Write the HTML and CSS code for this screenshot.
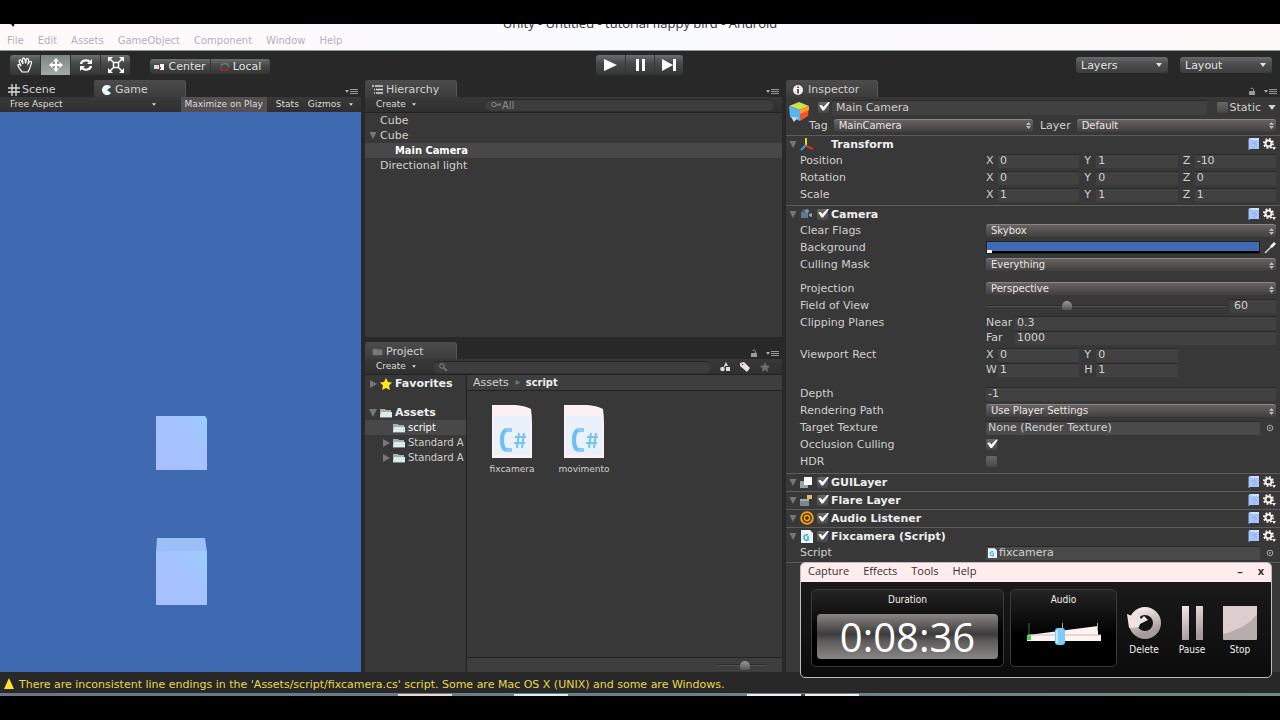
FILE: index.html
```html
<!DOCTYPE html>
<html lang="en">
<head>
<meta charset="utf-8">
<title>Unity - Untitled - tutorial flappy bird - Android</title>
<link rel="stylesheet" href="styles.css">
</head>
<body>
<svg class="defs" aria-hidden="true">
  <symbol id="fold" viewBox="0 0 8 8"><path d="M0 0H8L4 8Z" fill="#777"/></symbol>
  <symbol id="foldr" viewBox="0 0 8 8"><path d="M1 0L8 4L1 8Z" fill="#777"/></symbol>
  <symbol id="down" viewBox="0 0 6 4"><path d="M0 0H6L3 4Z" fill="currentColor"/></symbol>
  <symbol id="panemenu" viewBox="0 0 13 7"><path d="M0 2H4L2 5Z" fill="#aaa"/><path d="M5 1.5H13M5 3.5H13M5 5.5H13" stroke="#999" stroke-width="1"/></symbol>
  <symbol id="lock" viewBox="0 0 8 8"><path d="M1 4H7V8H1Z" fill="#999"/><path d="M5.5 4V2.500A1.600 1.600 0 0 0 2.500 2" fill="none" stroke="#999"/></symbol>
  <symbol id="book" viewBox="0 0 12 12"><path d="M0 1H2V12H0Z" fill="#5a7cb8"/><path d="M1 0H11V11H1Z" fill="#a9c4f5"/><path d="M3 0H11V2H3Z" fill="#cfe0ff"/><path d="M4 5H8M7 7H9M5 9H7" stroke="#8da9e6"/></symbol>
  <symbol id="gear" viewBox="0 0 13 12"><circle cx="5.5" cy="5.5" r="3" fill="none" stroke="#f4f0ea" stroke-width="2"/><circle cx="5.5" cy="5.5" r="4.6" fill="none" stroke="#f4f0ea" stroke-width="1.8" stroke-dasharray="1.8 1.81"/><path d="M9 9H13L11 12Z" fill="#f4f0ea"/></symbol>
  <symbol id="folder" viewBox="0 0 12 10"><path d="M0 1H5L6 2H11V9H0Z" fill="#9fb0b0"/><path d="M1 4H12V9H0Z" fill="#dfe9e8"/><path d="M0 9H12V10H0Z" fill="#7a8886"/></symbol>
  <symbol id="csfile" viewBox="0 0 12 13"><path d="M0 0H9L12 3V13H0Z" fill="#e9f4fc"/><path d="M7 5A2.800 2.800 0 1 0 7 10V6" fill="none" stroke="#39a9e6" stroke-width="1.5"/></symbol>
  <symbol id="target" viewBox="0 0 8 8"><circle cx="4" cy="4" r="2.8" fill="none" stroke="#aaa"/><circle cx="4" cy="4" r="1" fill="#999"/></symbol>
  <symbol id="script" viewBox="0 0 40 54"><path d="M0 0H24Q34 1 39 4Q40 12 40 18V53H0Z" fill="#fbf0f4"/><path d="M2 11H38V50H2Z" fill="#eaf1fb"/><path d="M20 25H15Q10 26 10 35Q10 45 15 45H20" fill="none" stroke="#8accf6" stroke-width="4"/><path d="M14 25Q10 27 10 35Q10 43 14 45" fill="none" stroke="#70bff2" stroke-width="4"/><path d="M27 28L25 43M32 28L30 43M23 32H34M22 38H33" stroke="#74c2f0" stroke-width="2"/></symbol>
</svg>

<div class="app">
  <header class="titlebar">
    <div class="title"><svg class="applogo" viewBox="0 0 8 4"><path d="M1 0H7V3H4V1Z" fill="#111"/></svg><span>Unity - Untitled - tutorial flappy bird - Android</span></div>
    <nav class="menubar">
      <button>File</button><button>Edit</button><button>Assets</button><button>GameObject</button><button>Component</button><button>Window</button><button>Help</button>
    </nav>
  </header>

  <div class="toolbar">
    <div class="left">
      <div class="group tools">
        <button aria-label="Hand"><svg width="18" height="18" viewBox="0 0 18 18"><path d="M6 16C4 13 1 10 2 8.500C3 8 4 9 5 10L3 5C3 3.500 5 3.500 5.500 5L7 8L6.500 3C7 1.500 8.500 2 9 3.500L9.500 7.500L10.500 3C11.500 2 13 3 12.500 4.500L12 8L14 5.500C15 5 16 6 15.500 7L13.500 13L12 16Z" fill="#3c4040" stroke="#fff" stroke-width="1.200"/></svg></button>
        <button class="on" aria-label="Move"><svg width="16" height="16" viewBox="0 0 16 16"><path d="M8 1L11 4.500H9V7H11.500V5L15 8L11.500 11V9H9V11.500H11L8 15L5 11.500H7V9H4.500V11L1 8L4.500 5V7H7V4.500H5Z" fill="#fff"/></svg></button>
        <button aria-label="Rotate"><svg width="16" height="16" viewBox="0 0 16 16"><path d="M3 7A5 4 0 0 1 12 5M13 9A5 4 0 0 1 4 11" fill="none" stroke="#fff" stroke-width="2.200"/><path d="M14 2V7H9ZM2 14V9H7Z" fill="#fff"/></svg></button>
        <button aria-label="Scale"><svg width="18" height="18" viewBox="0 0 18 18"><path d="M6.500 6.500H11.500V11.500H6.500Z" fill="none" stroke="#fff" stroke-width="1.500"/><path d="M1 1H6L1 6ZM17 1H12L17 6ZM1 17H6L1 12ZM17 17H12L17 12Z" fill="#fff"/><path d="M3 3L6 6M15 3L12 6M3 15L6 12M15 15L12 12" stroke="#fff" stroke-width="1.500"/></svg></button>
      </div>
      <div class="group pivots">
        <button><svg width="11" height="8" viewBox="0 0 11 8"><path d="M0 2H5V6H0Z" fill="#ddd"/><path d="M6 1H10V7H6Z" fill="#fff"/><path d="M5 4H7V6H5Z" fill="#b33"/></svg>Center</button>
        <button><svg width="10" height="10" viewBox="0 0 10 10"><path d="M1 6A4 4 0 0 1 9 5" fill="none" stroke="#777" stroke-width="1.500"/><path d="M1 4V8H8V5" fill="none" stroke="#833" stroke-width="1.500"/></svg>Local</button>
      </div>
    </div>
    <div class="group play">
      <button aria-label="Play"><svg width="14" height="14" viewBox="0 0 14 14"><path d="M1 1L14 7L1 13Z" fill="#fff"/></svg></button>
      <button aria-label="Pause"><svg width="14" height="14" viewBox="0 0 14 14"><path d="M3 1H6V13H3ZM9 1H12V13H9Z" fill="#fff"/></svg></button>
      <button aria-label="Step"><svg width="16" height="14" viewBox="0 0 16 14"><path d="M1 1L12 7L1 13ZM12 1H15V13H12Z" fill="#fff"/></svg></button>
    </div>
    <div class="right">
      <button class="drop">Layers<svg width="6" height="4"><use href="#down"/></svg></button>
      <button class="drop">Layout<svg width="6" height="4"><use href="#down"/></svg></button>
    </div>
  </div>

  <main class="workspace">
    <section class="pane game">
      <div class="tabs">
        <button class="tab scene"><svg width="12" height="12" viewBox="0 0 12 12"><path d="M4 0V12M8 0V12M0 4H12M0 8H12" stroke="#ddd" stroke-width="1.300"/></svg>Scene</button>
        <button class="tab active"><svg width="10" height="10" viewBox="0 0 10 10"><path d="M9 2A5 5 0 1 0 9 8L5 5Z" fill="#e8ffff"/></svg>Game</button>
        <span class="corner"><svg width="13" height="7"><use href="#panemenu"/></svg></span>
      </div>
      <div class="panebar">
        <button class="aspect">Free Aspect<svg width="4" height="3"><use href="#down"/></svg></button>
        <button class="max">Maximize on Play</button>
        <button>Stats</button>
        <button>Gizmos<svg width="4" height="3"><use href="#down"/></svg></button>
      </div>
      <svg class="view" viewBox="0 0 361 560" preserveAspectRatio="xMidYMax slice">
        <defs><linearGradient id="face" x1="0" y1="1" x2="1" y2="0"><stop offset="0" stop-color="#a8bfff"/><stop offset=".6" stop-color="#a4c2ff"/><stop offset="1" stop-color="#9cccfb"/></linearGradient></defs>
        <path d="M0 0H361V560H0Z" fill="#3f69b0"/>
        <path d="M156 304H205L207 307V358H156Z" fill="url(#face)"/>
        <path d="M157 426H205L207 440H156Z" fill="#9dbff8"/>
        <path d="M156 439H207V493H156Z" fill="url(#face)"/>
      </svg>
    </section>

    <div class="middle">
      <section class="pane">
        <div class="tabs">
          <button class="tab active"><svg width="11" height="9" viewBox="0 0 11 9"><path d="M0 1H2M3 1H11M4 4.500H11M4 8H11M2 4.500H3M2 8H3" stroke="#ddd" stroke-width="1.400"/></svg>Hierarchy</button>
          <span class="corner"><svg width="13" height="7"><use href="#panemenu"/></svg></span>
        </div>
        <div class="panebar">
          <button class="create">Create<svg width="4" height="3"><use href="#down"/></svg></button>
          <label class="search all"><svg width="10" height="8" viewBox="0 0 10 8"><circle cx="3" cy="3.500" r="2.200" fill="none" stroke="#888"/><path d="M5 4H10M7 3H10" stroke="#888"/></svg><input type="text" placeholder="All" aria-label="Search hierarchy"></label>
        </div>
        <ul class="tree">
          <li>Cube</li>
          <li><svg class="tri" width="8" height="7"><use href="#fold"/></svg>Cube</li>
          <li class="child sel">Main Camera</li>
          <li>Directional light</li>
        </ul>
      </section>

      <section class="pane">
        <div class="tabs">
          <button class="tab active"><svg width="11" height="8" viewBox="0 0 12 10"><path d="M0 1H5L6 2H12V9H0Z" fill="#777"/></svg>Project</button>
          <span class="corner"><svg width="8" height="8"><use href="#lock"/></svg><svg width="13" height="7"><use href="#panemenu"/></svg></span>
        </div>
        <div class="panebar">
          <button class="create">Create<svg width="4" height="3"><use href="#down"/></svg></button>
          <label class="search"><svg width="8" height="8" viewBox="0 0 8 8"><circle cx="3" cy="3" r="2.300" fill="none" stroke="#888"/><path d="M5 5L8 8" stroke="#888" stroke-width="1.500"/></svg><input type="text" aria-label="Search project"></label>
          <div class="minis">
            <button aria-label="Filter by type"><svg width="10" height="10" viewBox="0 0 10 10"><path d="M6 0L8 4H4Z" fill="#ddd"/><circle cx="2.500" cy="7" r="2.300" fill="#ddd"/><path d="M6 5H10V9H6Z" fill="#ddd"/><path d="M3 6L6 3" stroke="#ddd"/></svg></button>
            <button aria-label="Filter by label"><svg width="10" height="10" viewBox="0 0 10 10"><path d="M0 1L4 0L10 6L7 10L0 4Z" fill="#eadede"/><circle cx="2.500" cy="2.500" r=".8" fill="#444"/></svg></button>
            <button aria-label="Save search"><svg width="10" height="10" viewBox="0 0 10 10"><path d="M5 0L6.500 3.500L10 4L7.500 6.500L8 10L5 8L2 10L2.500 6.500L0 4L3.500 3.500Z" fill="#6c6c6c"/></svg></button>
          </div>
        </div>
        <div class="project">
          <ul class="folders">
            <li class="top"><svg width="8" height="8"><use href="#foldr"/></svg><svg width="12" height="12" viewBox="0 0 12 12"><path d="M6 0L8 4L12 4.500L9 7.500L10 12L6 10L2 12L3 7.500L0 4.500L4 4Z" fill="#ffea1a"/></svg><b>Favorites</b></li>
            <li class="top gap"><svg width="8" height="8"><use href="#fold"/></svg><svg width="12" height="10"><use href="#folder"/></svg><b>Assets</b></li>
            <li class="sub sel"><i></i><svg width="12" height="10"><use href="#folder"/></svg>script</li>
            <li class="sub"><svg width="8" height="8"><use href="#foldr"/></svg><svg width="12" height="10"><use href="#folder"/></svg>Standard A</li>
            <li class="sub"><svg width="8" height="8"><use href="#foldr"/></svg><svg width="12" height="10"><use href="#folder"/></svg>Standard A</li>
          </ul>
          <div class="browser">
            <div class="crumbs"><a href="#">Assets</a><svg width="5" height="5"><use href="#foldr"/></svg><b>script</b></div>
            <div class="files">
              <figure><svg width="40" height="54"><use href="#script"/></svg><figcaption>fixcamera</figcaption></figure>
              <figure><svg width="40" height="54"><use href="#script"/></svg><figcaption>movimento</figcaption></figure>
            </div>
            <div class="zoombar"><input type="range" class="range" min="0" max="100" value="57" aria-label="Icon size"></div>
          </div>
        </div>
      </section>
    </div>

    <section class="pane inspector">
      <div class="tabs">
        <button class="tab active"><svg width="10" height="10" viewBox="0 0 10 10"><circle cx="5" cy="5" r="5" fill="#f4eeee"/><path d="M5 4V8.500M5 1.500V3" stroke="#333" stroke-width="1.600"/></svg>Inspector</button>
        <span class="corner"><svg width="8" height="8"><use href="#lock"/></svg><svg width="13" height="7"><use href="#panemenu"/></svg></span>
      </div>
      <div class="object">
        <svg class="cube" width="20" height="20" viewBox="0 0 20 20"><path d="M0 4L10 0L20 4L11 8Z" fill="#cfe04a"/><path d="M0 4L11 8V19L1 15Z" fill="#58b4f0"/><path d="M11 8L20 4L19 14L11 19Z" fill="#f0562a"/><path d="M11 8L20 4V8L11 12Z" fill="#ff9a30"/><path d="M2 15H9L5 20Z" fill="#c4dcf4"/></svg>
        <div class="lines">
          <div class="line name">
            <input type="checkbox" class="check" checked aria-label="Active">
            <input type="text" class="field" value="Main Camera" aria-label="Name">
            <label class="static"><input type="checkbox" class="check">Static</label>
            <svg width="8" height="5"><use href="#down"/></svg>
          </div>
          <div class="line tags">
            <label for="tag">Tag</label><select id="tag" class="popup"><option>MainCamera</option></select>
            <label for="layer">Layer</label><select id="layer" class="popup"><option>Default</option></select>
          </div>
        </div>
      </div>

      <div class="component">
        <div class="head"><svg width="8" height="7"><use href="#fold"/></svg><svg width="14" height="13" viewBox="0 0 14 13"><path d="M6 0V8" stroke="#d8e020" stroke-width="2"/><path d="M6 7L1 12" stroke="#3aa0e8" stroke-width="2"/><path d="M6 8L13 11" stroke="#d8301c" stroke-width="2"/></svg><i></i><h2>Transform</h2><span class="acts"><svg width="12" height="12"><use href="#book"/></svg><svg width="13" height="12"><use href="#gear"/></svg></span></div>
        <div class="row"><span>Position</span><div class="xyz"><label>X<input class="field" value="0"></label><label>Y<input class="field" value="1"></label><label>Z<input class="field" value="-10"></label></div></div>
        <div class="row"><span>Rotation</span><div class="xyz"><label>X<input class="field" value="0"></label><label>Y<input class="field" value="0"></label><label>Z<input class="field" value="0"></label></div></div>
        <div class="row"><span>Scale</span><div class="xyz"><label>X<input class="field" value="1"></label><label>Y<input class="field" value="1"></label><label>Z<input class="field" value="1"></label></div></div>
      </div>

      <div class="component">
        <div class="head"><svg width="8" height="7"><use href="#fold"/></svg><svg width="14" height="12" viewBox="0 0 14 12"><path d="M1 4H8V10H1Z" fill="#65788c"/><circle cx="4" cy="3" r="2" fill="#4f6275"/><circle cx="7" cy="3" r="2" fill="#7d93a8"/><path d="M9 6L12 5V9L9 8Z" fill="#8aa0b5"/></svg><input type="checkbox" class="check" checked aria-label="Camera enabled"><h2>Camera</h2><span class="acts"><svg width="12" height="12"><use href="#book"/></svg><svg width="13" height="12"><use href="#gear"/></svg></span></div>
        <div class="row"><label for="cf">Clear Flags</label><select id="cf" class="popup"><option>Skybox</option></select></div>
        <div class="row"><label for="bg">Background</label><div class="picker"><button id="bg" class="swatch" aria-label="Background colour"></button><svg width="12" height="12" viewBox="0 0 12 12"><path d="M1 11L8 4" stroke="#ddd" stroke-width="1.500"/><path d="M7 5L11 1" stroke="#fff" stroke-width="2.500"/></svg></div></div>
        <div class="row"><label for="cm">Culling Mask</label><select id="cm" class="popup"><option>Everything</option></select></div>
        <div class="row spaced"><label for="pr">Projection</label><select id="pr" class="popup"><option>Perspective</option></select></div>
        <div class="row"><label for="fov">Field of View</label><div class="slide"><input id="fov" type="range" class="range" min="1" max="179" value="60"><input class="field" value="60" aria-label="Field of View value"></div></div>
        <div class="row double"><span>Clipping Planes</span><div class="stack"><label>Near<input class="field" value="0.3"></label><label>Far<input class="field" value="1000"></label></div></div>
        <div class="row double"><span>Viewport Rect</span><div class="xyz"><label>X<input class="field" value="0"></label><label>Y<input class="field" value="0"></label><i></i><label>W<input class="field" value="1"></label><label>H<input class="field" value="1"></label></div></div>
        <div class="row spaced"><label for="dp">Depth</label><input id="dp" class="field" value="-1"></div>
        <div class="row"><label for="rp">Rendering Path</label><select id="rp" class="popup"><option>Use Player Settings</option></select></div>
        <div class="row"><label for="tt">Target Texture</label><div class="picker"><input id="tt" class="field ref" value="None (Render Texture)"><svg width="8" height="8"><use href="#target"/></svg></div></div>
        <div class="row"><label for="oc">Occlusion Culling</label><input id="oc" type="checkbox" class="check" checked></div>
        <div class="row"><label for="hdr">HDR</label><input id="hdr" type="checkbox" class="check"></div>
      </div>

      <div class="component slim">
        <div class="head"><svg width="8" height="7"><use href="#fold"/></svg><svg width="14" height="13" viewBox="0 0 14 13"><path d="M0 5H8V12H0Z" fill="#98a4aa"/><path d="M4 1H12V9H4Z" fill="#f4f6fa"/></svg><input type="checkbox" class="check" checked aria-label="GUILayer enabled"><h2>GUILayer</h2><span class="acts"><svg width="12" height="12"><use href="#book"/></svg><svg width="13" height="12"><use href="#gear"/></svg></span></div>
      </div>
      <div class="component slim">
        <div class="head"><svg width="8" height="7"><use href="#fold"/></svg><svg width="14" height="13" viewBox="0 0 14 13"><path d="M0 5H9V12H0Z" fill="#7c8a90"/><path d="M0 5H9V7H0Z" fill="#a0adb2"/><path d="M7 1H12V5H7Z" fill="#e8b868"/></svg><input type="checkbox" class="check" checked aria-label="Flare Layer enabled"><h2>Flare Layer</h2><span class="acts"><svg width="12" height="12"><use href="#book"/></svg><svg width="13" height="12"><use href="#gear"/></svg></span></div>
      </div>
      <div class="component slim">
        <div class="head"><svg width="8" height="7"><use href="#fold"/></svg><svg width="14" height="14" viewBox="0 0 14 14"><circle cx="7" cy="7" r="5.800" fill="#3a2a10" stroke="#f6a016" stroke-width="2"/><circle cx="7" cy="7" r="2.600" fill="none" stroke="#f6a016" stroke-width="1.600"/></svg><input type="checkbox" class="check" checked aria-label="Audio Listener enabled"><h2>Audio Listener</h2><span class="acts"><svg width="12" height="12"><use href="#book"/></svg><svg width="13" height="12"><use href="#gear"/></svg></span></div>
      </div>
      <div class="component last">
        <div class="head"><svg width="8" height="7"><use href="#fold"/></svg><svg width="14" height="13"><use href="#csfile"/></svg><input type="checkbox" class="check" checked aria-label="Fixcamera enabled"><h2>Fixcamera (Script)</h2><span class="acts"><svg width="12" height="12"><use href="#book"/></svg><svg width="13" height="12"><use href="#gear"/></svg></span></div>
        <div class="row"><label for="sc">Script</label><div class="picker"><div class="field ref withicon"><svg width="9" height="10"><use href="#csfile"/></svg><input id="sc" value="fixcamera"></div><svg width="8" height="8"><use href="#target"/></svg></div></div>
      </div>
    </section>
  </main>

  <footer class="status"><svg width="10" height="12" viewBox="0 0 10 12"><path d="M5 0L10 11H0Z" fill="#ffe12a"/></svg>There are inconsistent line endings in the 'Assets/script/fixcamera.cs' script. Some are Mac OS X (UNIX) and some are Windows.</footer>
  <div class="taskedge"></div>

  <aside class="recorder">
    <div class="rec-menu"><button>Capture</button><button>Effects</button><button>Tools</button><button>Help</button><span class="rec-win"><button aria-label="Minimize">–</button><button aria-label="Close">x</button></span></div>
    <div class="rec-body">
      <div class="box duration"><h3>Duration</h3><output>0:08:36</output></div>
      <div class="box audio"><h3>Audio</h3>
        <svg width="76" height="24" viewBox="0 0 76 24"><path d="M2 12L72 3V12H75V18H1V12Z" fill="#fff2f2"/><path d="M3 0V12" stroke="#4a6a4a"/><path d="M36.500 0V8M71.500 0V8" stroke="#aaa"/><path d="M1 12H5V17H1Z" fill="#43d83c"/><path d="M2 12H75" stroke="#cbbcbc" stroke-width="1"/><rect x="29" y="5" width="10" height="17" rx="3" fill="#7ecdf6"/><path d="M31 7V20" stroke="#bce8ff" stroke-width="2"/></svg>
      </div>
      <div class="rec-btns">
        <button><svg width="34" height="34" viewBox="0 0 34 34"><defs><linearGradient id="mt" x1="0" y1="0" x2="0.300" y2="1"><stop offset="0" stop-color="#f8e8e8"/><stop offset="1" stop-color="#a49c9c"/></linearGradient></defs><circle cx="18" cy="17" r="12" fill="none" stroke="url(#mt)" stroke-width="8"/><path d="M0 8L5 10L9 5L14 13L17 10L21 14L13 18L12 21L2 22Z" fill="#f0e2e2"/></svg>Delete</button>
        <button><svg width="34" height="34" viewBox="0 0 34 34"><path d="M7 0H14V34H7ZM21 0H28V34H21Z" fill="url(#mt)"/></svg>Pause</button>
        <button><svg width="34" height="34" viewBox="0 0 34 34"><rect width="34" height="34" rx="1" fill="#b8adad"/><path d="M0 0H34V8Q24 22 0 28Z" fill="#dccece"/></svg>Stop</button>
      </div>
    </div>
  </aside>
</div>
</body>
</html>
```
FILE: styles.css
```css
* { box-sizing: border-box; }
body {
  margin: 0;
  background: #000;
  color: #d2d0ce;
  font: 11px/15px "DejaVu Sans", Verdana, sans-serif;
}
button, input, select { font: inherit; color: inherit; margin: 0; padding: 0; border: 0; background: none; }
ul { list-style: none; margin: 0; padding: 0; }
h2, h3, figure { margin: 0; font-size: inherit; }
svg { flex: none; }
b { font-weight: bold; }
.defs { position: absolute; width: 0; height: 0; }

.app {
  position: relative;
  display: flex;
  flex-direction: column;
  min-height: 100vh;
  padding: 24px 0;
}

/* window title and menu */
.titlebar { height: 27px; background: linear-gradient(90deg, #fffafa, #fafbff 50%, #fffafa); border-bottom: 1px solid #8b9995; }
.title {
  display: flex;
  align-items: flex-end;
  justify-content: center;
  height: 7px;
  overflow: hidden;
  font: 13px/16px "Open Sans", sans-serif;
  color: #333;
  position: relative;
}
.applogo { position: absolute; left: 8px; top: 0; width: 8px; height: 3px; }
.menubar { display: flex; gap: 14px; padding: 2px 7px; font-size: 10px; }
.menubar button { color: #b4afbc; line-height: 15px; }

/* main toolbar */
.toolbar {
  display: grid;
  grid-template-columns: 1fr auto 1fr;
  align-items: start;
  padding: 4px 8px 0 10px;
  height: 29px;
  background: #282828;
}
.left { display: flex; gap: 20px; }
.right { display: flex; gap: 12px; justify-content: flex-end; padding-top: 2px; }
.group { display: flex; border-radius: 3px; overflow: hidden; background: linear-gradient(#6a6e6e, #474a4a 40%, #343636); }
.group button { display: flex; align-items: center; justify-content: center; }
.group button + button { border-left: 1px solid #333; }
.tools button { width: 30px; height: 20px; }
.group .on { background: linear-gradient(#7e8684, #a4aaa8); }
.pivots { margin-top: 4px; height: 15px; }
.pivots button { width: 60px; gap: 3px; color: #e4e2e0; }
.play { margin-right: 4px; }
.play button { width: 29px; height: 20px; }
.drop {
  display: flex;
  align-items: center;
  justify-content: space-between;
  width: 92px;
  height: 16px;
  padding: 0 6px 0 5px;
  border-radius: 3px;
  background: linear-gradient(#666a6a, #4c5050 40%, #3c3e3e);
  color: #e4e2e0;
}

/* workspace */
.workspace {
  flex: 1;
  display: grid;
  grid-template-columns: 361fr 417fr 494fr;
  gap: 4px;
  background: #282828;
}
.middle { display: grid; grid-template-rows: 257fr 330fr; gap: 5px; min-width: 0; }
.pane { display: flex; flex-direction: column; min-width: 0; background: #383838; }
.tabs { display: flex; height: 17px; background: #282828; }
.tab { display: flex; align-items: center; gap: 3px; width: 92px; padding: 2px 7px 0; }
.tab.active { background: linear-gradient(#4c4c4c, #3c3c3c); border-radius: 3px 3px 0 0; border-right: 1px solid #555; }
.tab.scene { width: 94px; gap: 2px; padding-left: 8px; }
.game .tab.active { padding-left: 8px; }
.corner { margin-left: auto; display: flex; align-items: flex-end; gap: 8px; padding: 0 3px 2px; }
.panebar {
  display: flex;
  align-items: center;
  height: 16px;
  padding: 0 8px 0 10px;
  background: linear-gradient(#383838, #303030);
  border-bottom: 1px solid #222;
  font-size: 9px;
}
.panebar button { display: flex; align-items: center; gap: 8px; color: #deddda; }
.game .panebar { gap: 9px; height: 15px; border: 0; }
.game .panebar .aspect { flex: 1; justify-content: space-between; padding-right: 12px; }
.game .panebar .max { align-self: stretch; padding: 0 4px; margin: 0 0 0 4px; background: #544f51; }
.panebar .create { width: 58px; gap: 6px; padding-left: 1px; }
.search { flex: 1; display: flex; align-items: center; gap: 1px; height: 12px; padding: 0 6px; border-radius: 6px; background: #3d3d3d; border-top: 1px solid #252525; }
.search input { flex: 1; min-width: 0; line-height: 11px; height: 11px; font-size: 10px; }
.search input::placeholder { color: #8c8c8c; }
.search.all { margin-left: 52px; }
.minis { display: flex; gap: 10px; padding: 0 4px 0 9px; }
.view { flex: 1; width: 100%; min-height: 0; height: 0; display: block; }

.tree li { position: relative; padding-left: 15px; height: 15px; }
.tri { position: absolute; left: 4px; top: 4px; }
.tree .child { padding-left: 30px; font-weight: bold; color: #fff; font-family: "DejaVu Sans Condensed", "DejaVu Sans", sans-serif; }
.sel { background: #484848; color: #fff; }

.project { flex: 1; display: grid; grid-template-columns: 102px 1fr; }
.folders { border-right: 1px solid #222; overflow: hidden; padding-top: 1px; }
.folders li { display: flex; align-items: center; gap: 3px; height: 15px; white-space: nowrap; }
.folders li > :first-child { width: 8px; }
.folders .top { padding-left: 4px; }
.folders .top b { color: #eee; }
.folders .gap { margin-top: 14px; }
.folders .sub { padding-left: 17px; font-size: 10px; }
.browser { display: flex; flex-direction: column; min-width: 0; }
.crumbs { display: flex; align-items: center; gap: 6px; height: 16px; padding: 0 6px; background: #3e3e3e; border-bottom: 1px solid #222; }
.crumbs a { color: inherit; text-decoration: none; }
.crumbs b { color: #eee; font-family: "DejaVu Sans Condensed", "DejaVu Sans", sans-serif; }
.files { flex: 1; display: flex; gap: 12px; padding: 14px 15px; align-items: flex-start; }
.files figure { display: flex; flex-direction: column; align-items: center; gap: 3px; width: 60px; font-size: 9px; }
.zoombar { display: flex; justify-content: flex-end; align-items: center; height: 15px; padding-right: 15px; background: #3e3e3e; border-top: 1px solid #222; }
.zoombar .range { width: 50px; }

.range { appearance: none; height: 12px; background: linear-gradient(#2c2c2c 50%, #505050 50%) center / 100% 2px no-repeat; }
.range::-webkit-slider-thumb { appearance: none; width: 10px; height: 9px; border-radius: 5px 5px 2px 2px; background: linear-gradient(#999, #555); }

/* inspector */
.inspector .tab.active { gap: 5px; }
.object { display: flex; gap: 0; padding: 1px 4px 0 3px; height: 38px; }
.cube { margin-top: 4px; }
.lines { flex: 1; min-width: 0; }
.line { display: flex; align-items: center; height: 18px; }
.name { padding-left: 9px; }
.name .field { flex: 1; margin: 0 10px 0 3px; height: 15px; }
.name svg { margin-left: 7px; }
.static { display: flex; align-items: center; gap: 2px; }
.tags label { margin-right: 6px; }
.tags select { flex: 1; min-width: 0; }
.tags #tag + label { margin-left: 7px; }
.check {
  appearance: none;
  flex: none;
  position: relative;
  width: 11px;
  height: 11px;
  border-radius: 2px;
  background: linear-gradient(#6b6767, #484646);
}
.check:checked::after {
  content: "";
  position: absolute;
  inset: 0 -1px 2px 0;
  background: #fff;
  clip-path: polygon(10% 45%, 30% 40%, 45% 62%, 85% 5%, 100% 8%, 50% 100%, 38% 100%);
}
.component { border-top: 1px solid #5c5c5c; padding: 0 4px 2px 3px; }
.component + .component { padding-bottom: 3px; }
.component + .slim { padding-bottom: 1px; }
.component.last { border-bottom: 1px solid #5c5c5c; padding-bottom: 1px; }
.head { display: flex; align-items: center; height: 16px; gap: 3px; }
.head h2 { flex: 1; color: #eee; }
.head i { width: 11px; }
.acts { display: flex; gap: 3px; }
.row { display: grid; grid-template-columns: 186px minmax(0, 1fr); align-items: center; height: 17px; padding-left: 11px; }
.row.spaced { margin-top: 7px; }
.row.double { height: 32px; align-items: start; padding-top: 1px; }
.field {
  width: 100%;
  min-width: 0;
  height: 14px;
  padding: 0 4px;
  background: #414141;
  box-shadow: inset 0 1px #292929;
  line-height: 13px;
}
.row .field { padding: 0 2px; }
.row .ref { background: #4a4a4a; }
.popup {
  appearance: none;
  width: 100%;
  height: 13px;
  padding: 0 5px;
  border-radius: 3px;
  border-top: 1px solid #8a8686;
  background: url("data:image/svg+xml,%3Csvg xmlns='http://www.w3.org/2000/svg' width='5' height='7'%3E%3Cpath d='M0 3L2.5 0L5 3ZM0 4H5L2.5 7Z' fill='%23bbb'/%3E%3C/svg%3E") right 2px center no-repeat, linear-gradient(#676363, #403e3e);
  font-size: 10px;
  line-height: 12px;
  color: #eae6e4;
}
.xyz { display: grid; grid-template-columns: repeat(3, minmax(0, 1fr)); column-gap: 5px; }
.xyz label { display: grid; grid-template-columns: 12px minmax(0, 1fr); align-items: center; height: 15px; }
.stack label { display: grid; grid-template-columns: 29px minmax(0, 1fr); align-items: center; height: 15px; }
.slide { display: grid; grid-template-columns: minmax(0, 1fr) 46px; gap: 4px; align-items: center; }
.slide .field { padding-left: 4px; }
.slide .range { width: 100%; }
.picker { display: grid; grid-template-columns: minmax(0, 1fr) 12px; gap: 4px; align-items: center; }
.picker > svg { justify-self: center; }
.swatch { height: 13px; border: 1px solid #222; background: linear-gradient(#fff, #fff) 0 100% / 5px 3px no-repeat, linear-gradient(#3f6bb4 0 9px, #000 9px); }
.withicon { display: flex; align-items: center; gap: 2px; }
.withicon input { flex: 1; min-width: 0; height: 13px; }

/* status line */
.status { display: flex; align-items: center; gap: 5px; height: 21px; padding: 3px 4px 0; background: #282828; color: #e8d84a; }
.taskedge {
  height: 3px;
  background: linear-gradient(90deg, transparent 398px, #f0d4d4 398px 452px, transparent 452px 514px, #dceef0 514px 568px, transparent 568px 747px, #eef2f2 747px 801px, #444 801px 805px, #eef2f2 805px 859px, transparent 859px) 0 100% / 100% 2px no-repeat, linear-gradient(90deg, #6b7688, #718a84);
}

/* floating recorder */
.recorder {
  position: absolute;
  right: 8px;
  bottom: 42px;
  width: 472px;
  border: 1px solid #c4bcbc;
  border-radius: 5px;
  overflow: hidden;
  background: linear-gradient(#1c1c1c, #0c0c0c);
  color: #f4f0f0;
  font: 10px/14px "DejaVu Sans Condensed", Tahoma, sans-serif;
}
.rec-menu { display: flex; gap: 14px; height: 19px; padding: 0 7px 3px; background: #ffecec; color: #333; font: 11px/16px "Open Sans", sans-serif; }
.rec-win { margin-left: auto; display: flex; gap: 15px; font-weight: bold; }
.rec-body { display: grid; grid-template-columns: 193fr 107fr 138fr; gap: 6px; padding: 7px 10px 10px; }
.box { display: flex; flex-direction: column; align-items: center; min-width: 0; height: 78px; border: 1px solid #3a3a3a; border-radius: 5px; background: linear-gradient(#242424, #000 60%); }
.box h3 { font-weight: normal; line-height: 20px; }
.duration { padding: 0 5px; }
.duration output {
  align-self: stretch;
  margin-top: 4px;
  height: 45px;
  border-radius: 4px;
  background: linear-gradient(#8a8686, #3c3a3a 45%, #5c5a5a 60%, #8a8686);
  color: #fff;
  text-align: center;
  font: 40px/45px "Open Sans", sans-serif;
}
.audio { gap: 13px; }
.rec-btns { display: flex; justify-content: space-between; min-width: 0; }
.rec-btns button { display: flex; flex-direction: column; align-items: center; gap: 3px; width: 42px; padding-top: 17px; }
```
